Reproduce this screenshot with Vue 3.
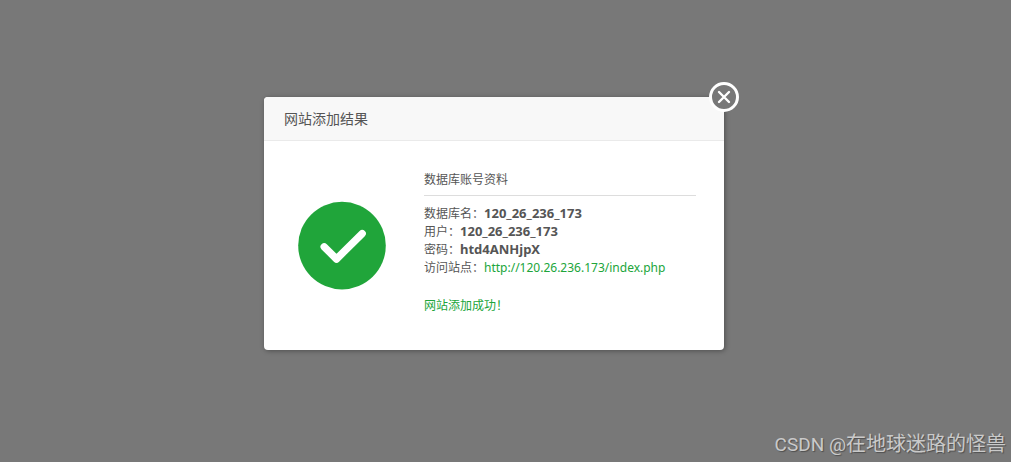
<script setup>
const title = '网站添加结果'
const site = 'http://120.26.236.173/index.php'
const account = [
  { label: '数据库名：', value: '120_26_236_173' },
  { label: '用户：', value: '120_26_236_173' },
  { label: '密码：', value: 'htd4ANHjpX' },
]
</script>

<template>
  <main class="overlay">
    <section class="dialog" role="dialog" aria-labelledby="dialog-title">
      <header class="head">
        <h1 id="dialog-title">{{ title }}</h1>
      </header>
      <button class="close" type="button" aria-label="关闭">
        <svg viewBox="0 0 30 30" width="30" height="30" aria-hidden="true">
          <circle cx="15" cy="15" r="13.5" fill="#787878" stroke="#fff" stroke-width="3" />
          <path d="M10 10 20 20M20 10 10 20" stroke="#fff" stroke-width="2.4" stroke-linecap="round" />
        </svg>
      </button>
      <div class="body">
        <svg class="success" viewBox="0 0 88 88" width="88" height="88" aria-hidden="true">
          <circle cx="44" cy="43.6" r="43.8" fill="#20a53a" />
          <path d="M26.2 44.8 38.5 57 64.2 31.6" fill="none" stroke="#fff" stroke-width="7.4" stroke-linecap="round" stroke-linejoin="round" />
        </svg>
        <div class="info">
          <h2>数据库账号资料</h2>
          <p v-for="row in account" :key="row.label" class="row">{{ row.label }}<strong>{{ row.value }}</strong></p>
          <p class="row">访问站点：<a :href="site">{{ site }}</a></p>
          <p class="done">网站添加成功！</p>
        </div>
      </div>
    </section>
    <p class="credit"><span class="latin">CSDN @</span>在地球迷路的怪兽</p>
  </main>
</template>

<style>
body {
  background: #787878;
}
</style>

<style scoped>
.overlay {
  position: relative;
  box-sizing: border-box;
  min-height: 100vh;
  padding: 0 23px 15px 0;
  display: flex;
  align-items: center;
  justify-content: center;
  font: 12px/18px "Noto Sans", "Noto Sans CJK SC", sans-serif;
  color: #555;
  background: #787878;
}
h1,
h2,
p {
  margin: 0;
  font-weight: 400;
}
.dialog {
  position: relative;
  width: 460px;
  background: #fff;
  border-radius: 4px;
  box-shadow: 1px 1px 5px rgba(0, 0, 0, 0.35);
}
.head {
  padding: 0 20px;
  background: #f8f8f8;
  border-bottom: 1px solid #eaeaea;
  border-radius: 4px 4px 0 0;
}
h1 {
  font-size: 14px;
  line-height: 43px;
}
.close {
  position: absolute;
  top: -15px;
  right: -15px;
  padding: 0;
  border: 0;
  background: none;
  cursor: pointer;
}
.close svg {
  display: block;
}
.body {
  display: flex;
  align-items: center;
  gap: 38px;
  padding: 30px 28px 35px 34px;
}
.success {
  flex: none;
  margin-top: 5px;
  overflow: visible;
}
.info {
  flex: 1;
}
h2 {
  margin-bottom: 9px;
  padding-bottom: 6px;
  border-bottom: 1px solid #ddd;
  font-size: 12px;
  line-height: 18px;
}
.row {
  white-space: nowrap;
}
strong {
  font-size: 13px;
  font-weight: 700;
  line-height: 16px;
}
a {
  color: #20a53a;
  text-decoration: none;
}
.done {
  margin-top: 20px;
  color: #20a53a;
}
.credit {
  position: absolute;
  right: 5px;
  bottom: 3px;
  font: 20px/28px "Noto Sans CJK SC", sans-serif;
  color: #cacaca;
  text-shadow: 1px 1px 1px rgba(0, 0, 0, 0.35);
}
.latin {
  font-family: Roboto, sans-serif;
  font-size: 19px;
}
</style>
